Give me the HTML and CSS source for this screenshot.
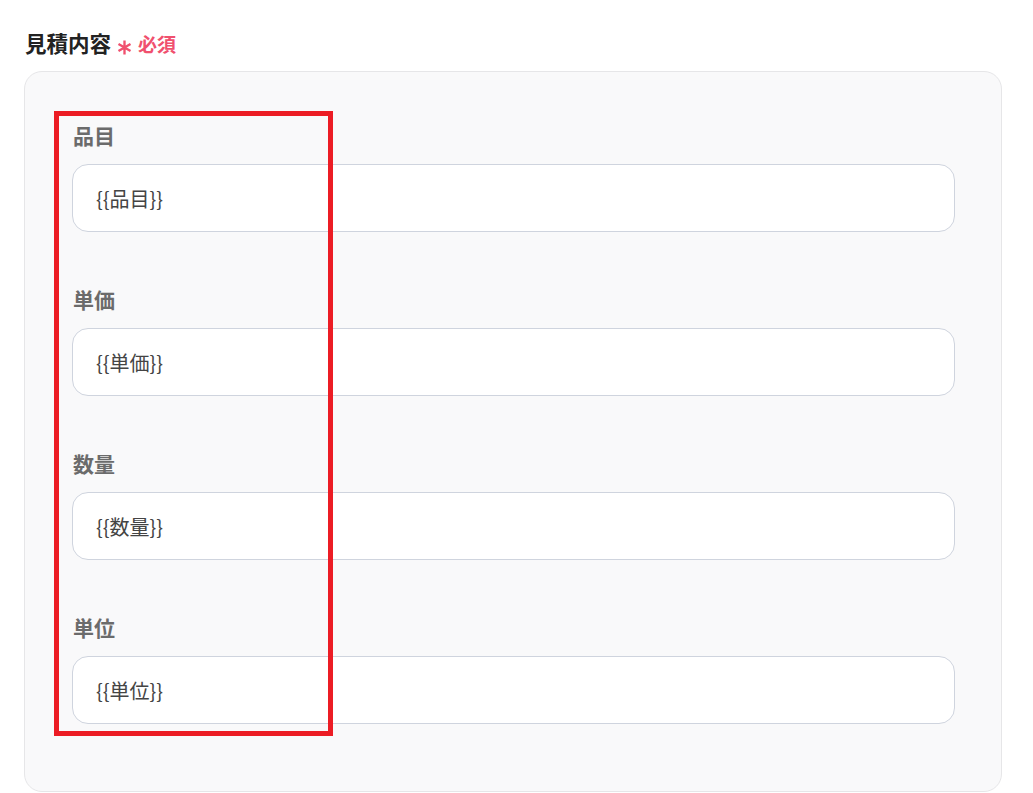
FILE: index.html
```html
<!DOCTYPE html>
<html lang="ja">

<head>
    <meta charset="UTF-8">
    <meta name="viewport" content="width=device-width, initial-scale=1.0">
    <title>見積内容</title>
    <link rel="stylesheet" href="styles.css">
</head>

<body>
    <section class="form-block">
        <h2 class="block-title">
            見積内容
            <svg class="req-mark" viewBox="0 0 14 14" width="15" height="15">
                <path d="M7 0.5V13.5M1.4 3.75L12.6 10.25M12.6 3.75L1.4 10.25" stroke="#f0506e" stroke-width="2.2" fill="none" />
            </svg>
            <span class="req-text">必須</span>
        </h2>

        <div class="panel">
            <div class="field">
                <div class="field-label">品目</div>
                <div class="field-input">{{品目}}</div>
            </div>
            <div class="field">
                <div class="field-label">単価</div>
                <div class="field-input">{{単価}}</div>
            </div>
            <div class="field">
                <div class="field-label">数量</div>
                <div class="field-input">{{数量}}</div>
            </div>
            <div class="field">
                <div class="field-label">単位</div>
                <div class="field-input">{{単位}}</div>
            </div>

            <!-- 注目範囲の赤枠 -->
            <div class="highlight"></div>
        </div>
    </section>
</body>

</html>
```

FILE: styles.css
```css
body {
    margin: 0px;
    background: #ffffff;
    font-family: "Noto Sans CJK JP", "Noto Sans", sans-serif;
}

.form-block {
    padding: 28px 31px 0px 24px;
}

.block-title {
    margin: 0px 0px 13px 1px;
    height: 30px;
    font-size: 21.5px;
    line-height: 30px;
    font-weight: 700;
    color: #222222;
    display: flex;
    align-items: center;
}

.req-mark {
    margin-left: 6px;
    margin-top: 9px;
}

.req-text {
    color: #f0506e;
    font-size: 19px;
    margin-left: 6px;
    margin-top: 1px;
}

.panel {
    position: relative;
    background: #f9f9fa;
    border: 1px solid #e6e6e8;
    border-radius: 18px;
    padding: 48px 46px 67px 47px;
    display: flex;
    flex-direction: column;
    gap: 52px;
}

.field {
    display: flex;
    flex-direction: column;
    gap: 14px;
}

.field-label {
    font-size: 21px;
    line-height: 30px;
    font-weight: 700;
    color: #6b6b6b;
    padding-left: 1px;
}

.field-input {
    height: 66px;
    box-sizing: content-box;
    border: 1px solid #cfd4de;
    border-radius: 16px;
    background: #ffffff;
    display: flex;
    align-items: center;
    padding-left: 23px;
    font-size: 20px;
    color: #444444;
}

.highlight {
    position: absolute;
    left: 29px;
    top: 39px;
    width: 269px;
    height: 615px;
    border: 5px solid #ec1c24;
    pointer-events: none;
}
```
